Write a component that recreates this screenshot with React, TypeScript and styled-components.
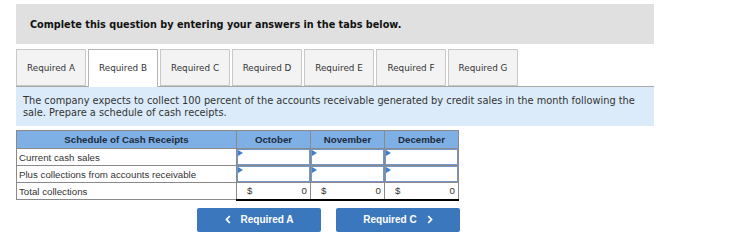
import React from "react";
import styled, { createGlobalStyle } from "styled-components";

const Global = createGlobalStyle`
  html, body { margin: 0; padding: 0; background: #fff; }
  * { box-sizing: border-box; }
`;

const Page = styled.div`
  padding: 4px 0 0 16px;
  width: 654px;
  font-family: "DejaVu Sans", Verdana, sans-serif;
  color: #222;
`;

const Banner = styled.div`
  height: 40px;
  background: #e0e0e0;
  display: flex;
  align-items: center;
  padding-left: 14px;
  font-size: 9.7px;
  font-weight: bold;
  color: #111;
`;

const Tabs = styled.div`
  margin-top: 5px;
  display: flex;
  gap: 2px;
  border-bottom: 1px solid #a9a9a9;
  height: 38px;
`;

const Tab = styled.div<{ $active?: boolean }>`
  width: 70px;
  height: ${(p) => (p.$active ? "38px" : "37px")};
  padding-bottom: ${(p) => (p.$active ? "1px" : "0")};
  display: flex;
  align-items: center;
  justify-content: center;
  font-family: "DejaVu Sans", Verdana, sans-serif;
  font-size: 8.8px;
  color: #333;
  background: ${(p) => (p.$active ? "#fff" : "#f3f3f3")};
  border: 1px solid ${(p) => (p.$active ? "#b5b5b5" : "#c8c8c8")};
  border-bottom: ${(p) => (p.$active ? "none" : "1px solid #c8c8c8")};
  position: relative;
  z-index: 1;
`;

const Info = styled.div`
  background: #dbebf9;
  padding: 8px 7px 6px 7px;
  font-family: "DejaVu Sans", Verdana, sans-serif;
  font-size: 9.8px;
  line-height: 12px;
  color: #333;
  height: 39px;
`;

const Table = styled.table`
  margin-top: 4px;
  border-collapse: collapse;
  font-family: "Liberation Sans", Arial, sans-serif;
  font-size: 9.7px;
  color: #333;
`;

const Th = styled.th<{ $w: number }>`
  width: ${(p) => p.$w}px;
  height: 18px;
  background: #7eb0e6;
  border: 1px solid #8a8a8a;
  font-weight: bold;
  text-align: center;
  padding: 0;
  color: #1d2a3a;
`;

const LabelCell = styled.td`
  height: 17px;
  border: 1px solid #8a8a8a;
  padding: 0 0 0 2px;
  text-align: left;
`;

const InputCell = styled.td`
  height: 17px;
  border: 1px solid #8a8a8a;
  padding: 0;
`;

const InputBox = styled.div`
  position: relative;
  height: 16px;
  border: 1px solid #7596c6;
  background: #fff;
  &::before {
    content: "";
    position: absolute;
    left: 0;
    top: 0;
    border-top: 3px solid transparent;
    border-bottom: 3px solid transparent;
    border-left: 5px solid #3f7fd0;
  }
`;

const TotalCell = styled.td`
  height: 17px;
  border-left: 1px solid #8a8a8a;
  border-right: 1px solid #8a8a8a;
  border-top: 1px solid #222;
  border-bottom: 2px solid #000;
  padding: 0 3px 0 10px;
`;

const TotalInner = styled.div`
  display: flex;
  justify-content: space-between;
`;

const Buttons = styled.div`
  display: flex;
  gap: 15px;
  margin-top: 7px;
  padding-left: 181px;
`;

const NavButton = styled.button`
  width: 124px;
  height: 24px;
  background: #3b77bc;
  border: none;
  border-radius: 2px;
  color: #fff;
  font-family: "Liberation Sans", Arial, sans-serif;
  font-weight: bold;
  font-size: 10px;
  display: flex;
  align-items: center;
  justify-content: center;
  gap: 10px;
  padding: 0;
`;

const Chevron = ({ dir }: { dir: "left" | "right" }) => (
  <svg width="6" height="9" viewBox="0 0 6 9">
    <path
      d={dir === "left" ? "M4.8 1 L1.5 4.5 L4.8 8" : "M1.2 1 L4.5 4.5 L1.2 8"}
      stroke="#fff"
      strokeWidth="1.8"
      fill="none"
    />
  </svg>
);

const months = ["October", "November", "December"];

export default function App() {
  return (
    <Page>
      <Global />
      <Banner>Complete this question by entering your answers in the tabs below.</Banner>
      <Tabs>
        {["A", "B", "C", "D", "E", "F", "G"].map((l) => (
          <Tab key={l} $active={l === "B"}>
            Required {l}
          </Tab>
        ))}
      </Tabs>
      <Info>
        The company expects to collect 100 percent of the accounts receivable generated by credit sales in the month following the sale. Prepare a schedule of cash receipts.
      </Info>
      <Table>
        <thead>
          <tr>
            <Th $w={220}>Schedule of Cash Receipts</Th>
            {months.map((m) => (
              <Th key={m} $w={74}>
                {m}
              </Th>
            ))}
          </tr>
        </thead>
        <tbody>
          {["Current cash sales", "Plus collections from accounts receivable"].map((r) => (
            <tr key={r}>
              <LabelCell>{r}</LabelCell>
              {months.map((m) => (
                <InputCell key={m}>
                  <InputBox />
                </InputCell>
              ))}
            </tr>
          ))}
          <tr>
            <LabelCell>Total collections</LabelCell>
            {months.map((m) => (
              <TotalCell key={m}>
                <TotalInner>
                  <span>$</span>
                  <span>0</span>
                </TotalInner>
              </TotalCell>
            ))}
          </tr>
        </tbody>
      </Table>
      <Buttons>
        <NavButton>
          <Chevron dir="left" />
          Required A
        </NavButton>
        <NavButton>
          Required C
          <Chevron dir="right" />
        </NavButton>
      </Buttons>
    </Page>
  );
}
